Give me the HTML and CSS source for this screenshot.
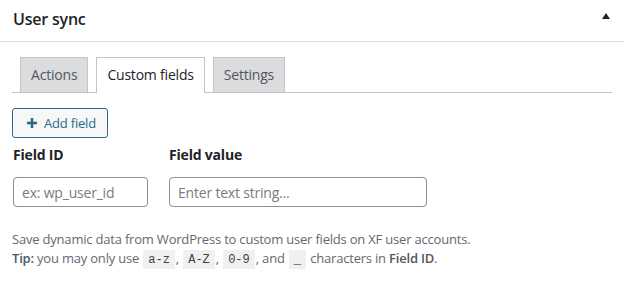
FILE: index.html
```html
<!DOCTYPE html>
<html lang="en">
<head>
    <meta charset="UTF-8">
    <meta name="viewport" content="width=device-width, initial-scale=1.0">
    <title>User sync</title>
    <link rel="stylesheet" href="styles.css">
</head>
<body>
    <div class="postbox">
        <div class="postbox-header">
            <h2>User sync</h2>
            <button class="toggle" aria-label="Toggle panel">
                <svg width="10" height="8" viewBox="0 0 10 8"><path d="M5 1 L9 7 L1 7 Z" fill="#1d2327"/></svg>
            </button>
        </div>

        <div class="inside">
            <nav class="nav-tabs">
                <a class="nav-tab" href="#">Actions</a>
                <a class="nav-tab active" href="#">Custom fields</a>
                <a class="nav-tab" href="#">Settings</a>
            </nav>

            <div class="tab-panel">
                <button class="add-button">
                    <svg width="12" height="12" viewBox="0 0 12 12"><path d="M6 1v10M1 6h10" stroke="currentColor" stroke-width="2.6"/></svg>
                    Add field
                </button>

                <div class="field-grid">
                    <label class="field-label" for="field-id">Field ID</label>
                    <label class="field-label" for="field-value">Field value</label>
                    <input type="text" id="field-id" class="field-id" placeholder="ex: wp_user_id">
                    <input type="text" id="field-value" class="field-value" placeholder="Enter text string...">
                </div>

                <p class="description">
                    Save dynamic data from WordPress to custom user fields on XF user accounts.<br>
                    <strong>Tip:</strong> you may only use <code>a-z</code>, <code>A-Z</code>, <code>0-9</code>, and <code>_</code> characters in <strong>Field ID</strong>.
                </p>
            </div>
        </div>
    </div>
</body>
</html>
```

FILE: styles.css
```css
* {
    margin: 0;
    padding: 0;
    box-sizing: border-box;
}

body {
    background: #fff;
    font-family: "Open Sans", "Noto Sans", sans-serif;
    font-size: 13px;
    letter-spacing: -0.2px;
    color: #3c434a;
}

.postbox-header {
    height: 42px;
    display: flex;
    align-items: center;
    justify-content: space-between;
    border-bottom: 1px solid #dcdcde;
    padding: 0 12px 4px 13px;
}

.postbox-header h2 {
    font-size: 16px;
    font-weight: 600;
    color: #1d2327;
}

.toggle {
    background: none;
    border: none;
    width: 20px;
    height: 20px;
    display: flex;
    align-items: center;
    justify-content: center;
    margin-right: -4px;
    margin-top: -6px;
}

.inside {
    padding: 15px 12px 12px;
}

.nav-tabs {
    display: flex;
    gap: 8px;
    padding-left: 8px;
    border-bottom: 1px solid #c3c4c7;
}

.nav-tab {
    display: block;
    padding: 5px 10px;
    font-size: 14px;
    line-height: 24px;
    color: #50575e;
    text-decoration: none;
    background: #dcdcde;
    border: 1px solid #c3c4c7;
    border-bottom: none;
}

.nav-tab.active {
    background: #fff;
    color: #1d2327;
    margin-bottom: -1px;
    padding-bottom: 6px;
}

.tab-panel {
    padding-top: 15px;
}

.add-button {
    display: inline-flex;
    align-items: center;
    gap: 6px;
    height: 30px;
    padding: 0 11px 0 13px;
    font-family: inherit;
    font-size: 13px;
    letter-spacing: inherit;
    color: #2b6a86;
    background: #f6f7f7;
    border: 1px solid #2b6a86;
    border-radius: 3px;
}

.field-grid {
    display: grid;
    grid-template-columns: 135px 258px;
    column-gap: 21px;
    row-gap: 12px;
    margin-top: 7px;
    padding-left: 1px;
}

.field-label {
    font-size: 14px;
    font-weight: 700;
    color: #1d2327;
    line-height: 20px;
}

.field-grid input {
    height: 30px;
    padding: 0 8px;
    font-family: inherit;
    font-size: 14px;
    letter-spacing: inherit;
    color: #2c3338;
    border: 1px solid #8c8f94;
    border-radius: 4px;
}

.field-grid input::placeholder {
    color: #787c82;
}

.description {
    margin-top: 23px;
    color: #646970;
    line-height: 19px;
}

.description strong {
    font-weight: 600;
    color: #50575e;
}

.description code {
    font-family: "Liberation Mono", "DejaVu Sans Mono", monospace;
    font-size: 12px;
    letter-spacing: 0;
    background: #f0f0f1;
    padding: 3px 5px 2px;
    margin: 0 1px;
    color: #3c434a;
}
```
